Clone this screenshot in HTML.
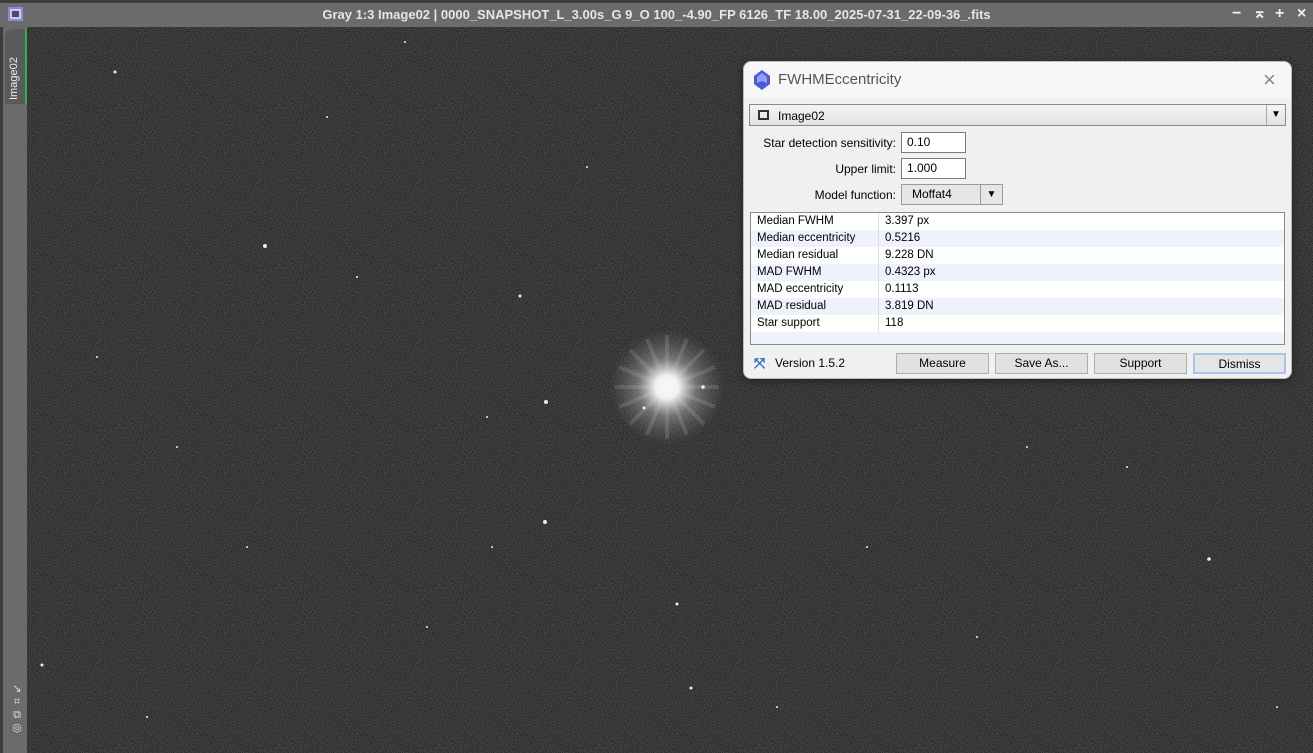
<!DOCTYPE html>
<html><head><meta charset="utf-8"><style>
*{margin:0;padding:0;box-sizing:border-box}
body{width:1313px;height:753px;overflow:hidden;background:#3a3a3a;font-family:"Liberation Sans",sans-serif;position:relative}
.abs{position:absolute}
#top{left:0;top:0;width:1313px;height:3px;background:#3c3c3c}
#title{left:0;top:3px;width:1313px;height:24px;background:#6b6b6b;color:#e6e6e6;font-weight:bold;font-size:13px;line-height:24px;text-align:center}
#left{left:0;top:27px;width:27px;height:726px;background:#6b6b6b;border-left:3px solid #3c3c3c}
#img{left:27px;top:27px;width:1286px;height:726px;background:#383838;overflow:hidden}
#dlg{left:743px;top:61px;width:549px;height:318px;background:#f0f0f0;border-radius:8px;border:1px solid #bbb;font-size:12px;color:#000;box-shadow:0 2px 8px rgba(0,0,0,.4)}
.lbl{font-size:12px;text-align:right}
.in{background:#fff;border:1px solid #7a7a7a;height:21px;padding-left:5px;font-size:12px;line-height:19px}
.btn{top:291px;width:93px;height:21px;border:1px solid #adadad;background:#e1e1e1;text-align:center;line-height:19px;font-size:12px}
.row{position:absolute;left:0;width:533px;height:17px;line-height:17px;font-size:11.5px}
.row span{position:absolute;left:6px}
.row b{font-weight:normal;position:absolute;left:134px}
.ti{top:6px;color:#eee;font-size:16px;font-weight:bold;line-height:16px}
</style></head><body>
<div class="abs" id="top"></div>
<div class="abs" id="title">Gray 1:3 Image02 | 0000_SNAPSHOT_L_3.00s_G 9_O 100_-4.90_FP 6126_TF 18.00_2025-07-31_22-09-36_.fits</div>
<div class="abs" style="left:8px;top:7px;width:15px;height:14px;background:#c8c8f0;border:2px solid #8a8ad8"><div style="margin:2px;height:6px;background:#4a4a6a"></div></div>
<div class="abs ti" style="left:1232px">−</div>
<div class="abs ti" style="left:1253px">⌅</div>
<div class="abs ti" style="left:1275px">+</div>
<div class="abs ti" style="left:1297px">×</div>
<div class="abs" id="left"></div>
<div class="abs" style="left:5px;top:29px;width:22px;height:75px;background:#5a5a5a;border-right:2px solid #2db34a;border-radius:8px 0 0 0"></div>
<div class="abs" style="left:8px;top:100px;color:#eee;font-size:11px;transform:rotate(-90deg);transform-origin:0 0;white-space:nowrap">Image02</div>
<div class="abs" style="left:10px;top:683px;color:#ddd;font-size:11px;line-height:13px;width:14px;text-align:center">↘<br>⌗<br>⧉<br>◎</div>
<div class="abs" id="img">
<svg width="1286" height="726" style="position:absolute;left:0;top:0">
<filter id="n" x="0" y="0" width="100%" height="100%" color-interpolation-filters="sRGB"><feTurbulence type="fractalNoise" baseFrequency="1.6" numOctaves="1" seed="3"/><feColorMatrix values="0.6 0 0 0 -0.08 0.6 0 0 0 -0.08 0.6 0 0 0 -0.08 0 0 0 0 1"/></filter>
<rect width="1286" height="726" filter="url(#n)"/>
<defs><radialGradient id="g"><stop offset="0" stop-color="#fff"/><stop offset="0.2" stop-color="#fff" stop-opacity=".95"/><stop offset="0.5" stop-color="#ccc" stop-opacity=".4"/><stop offset="1" stop-color="#888" stop-opacity="0"/></radialGradient></defs>
<circle cx="640" cy="360" r="58" fill="url(#g)"/>
<g stroke="#ddd" stroke-opacity=".15" stroke-width="4">
<path d="M640 308V412M588 360H692M603 323L677 397M677 323L603 397M620 312L660 408M660 312L620 408M592 340L688 380M592 380L688 340"/></g>
<g fill="#eee">
<circle cx="88" cy="45" r="1.5"/><circle cx="238" cy="219" r="2"/><circle cx="493" cy="269" r="1.5"/><circle cx="519" cy="375" r="2"/><circle cx="518" cy="495" r="2"/><circle cx="676" cy="360" r="1.8"/><circle cx="617" cy="381" r="1.5"/><circle cx="650" cy="577" r="1.5"/><circle cx="664" cy="661" r="1.5"/><circle cx="1182" cy="532" r="1.8"/><circle cx="15" cy="638" r="1.5"/><circle cx="150" cy="420" r="1"/><circle cx="378" cy="15" r="1"/><circle cx="300" cy="90" r="1"/><circle cx="460" cy="390" r="1"/><circle cx="70" cy="330" r="1"/><circle cx="840" cy="520" r="1"/><circle cx="950" cy="610" r="1"/><circle cx="1100" cy="440" r="1"/><circle cx="1250" cy="680" r="1"/><circle cx="400" cy="600" r="1"/><circle cx="220" cy="520" r="1"/><circle cx="750" cy="680" r="1"/><circle cx="560" cy="140" r="1"/><circle cx="1000" cy="420" r="1"/><circle cx="120" cy="690" r="1"/><circle cx="330" cy="250" r="1"/><circle cx="465" cy="520" r="1"/>
</g></svg></div>
<div class="abs" id="dlg">
<div class="abs" style="left:0;top:0;width:547px;height:36px;background:#f7f7f7;border-radius:8px 8px 0 0"></div>
<svg class="abs" style="left:10px;top:8px" width="16" height="20"><path d="M8 0 L16 6 L16 14 L8 20 L0 14 L0 6Z" fill="#4a5ad8"/><path d="M8 3 L13 7 L13 13 L8 11 L3 13 L3 7Z" fill="#8fa0ff"/></svg>
<div class="abs" style="left:34px;top:9px;font-size:15px;color:#555">FWHMEccentricity</div>
<div class="abs" style="left:519px;top:5px;font-size:22px;color:#888;font-weight:100">×</div>
<div class="abs" style="left:5px;top:42px;width:537px;height:22px;border:1px solid #8a8a8a;background:linear-gradient(#f4f4f4,#e2e2e2)"></div>
<div class="abs" style="left:14px;top:48px;width:11px;height:10px;border:2px solid #333"></div>
<div class="abs" style="left:34px;top:47px">Image02</div>
<div class="abs" style="left:522px;top:43px;width:19px;height:20px;border-left:1px solid #aaa;font-size:10px;text-align:center;line-height:20px">▼</div>
<div class="abs lbl" style="left:0;top:74px;width:152px">Star detection sensitivity:</div>
<div class="abs in" style="left:157px;top:70px;width:65px">0.10</div>
<div class="abs lbl" style="left:0;top:100px;width:152px">Upper limit:</div>
<div class="abs in" style="left:157px;top:96px;width:65px">1.000</div>
<div class="abs lbl" style="left:0;top:126px;width:152px">Model function:</div>
<div class="abs" style="left:157px;top:122px;width:102px;height:21px;border:1px solid #999;background:#e6e6e6;padding-left:10px;line-height:19px">Moffat4<span style="position:absolute;left:78px;top:0;width:22px;height:19px;border-left:1px solid #999;font-size:10px;text-align:center">▼</span></div>
<div class="abs" style="left:6px;top:150px;width:535px;height:133px;border:1px solid #8a8a8a;background:#fff">
<div class="row" style="top:0"><span>Median FWHM</span><b>3.397 px</b></div>
<div class="row" style="top:17px;background:#eef3fb"><span>Median eccentricity</span><b>0.5216</b></div>
<div class="row" style="top:34px"><span>Median residual</span><b>9.228 DN</b></div>
<div class="row" style="top:51px;background:#eef3fb"><span>MAD FWHM</span><b>0.4323 px</b></div>
<div class="row" style="top:68px"><span>MAD eccentricity</span><b>0.1113</b></div>
<div class="row" style="top:85px;background:#eef3fb"><span>MAD residual</span><b>3.819 DN</b></div>
<div class="row" style="top:102px"><span>Star support</span><b>118</b></div>
<div class="row" style="top:119px;height:12px;background:#eef3fb"></div>
<div class="abs" style="left:127px;top:0;width:1px;height:119px;background:#ddd"></div>
</div>
<div class="abs" style="left:10px;top:293px;color:#2a6ab8;font-size:14px;font-weight:bold">⤧</div>
<div class="abs" style="left:31px;top:294px">Version 1.5.2</div>
<div class="abs btn" style="left:152px">Measure</div>
<div class="abs btn" style="left:251px">Save As...</div>
<div class="abs btn" style="left:350px">Support</div>
<div class="abs btn" style="left:449px;border:2px solid #a8c4ea;background:#e5e5e5">Dismiss</div>
</div>
</body></html>
